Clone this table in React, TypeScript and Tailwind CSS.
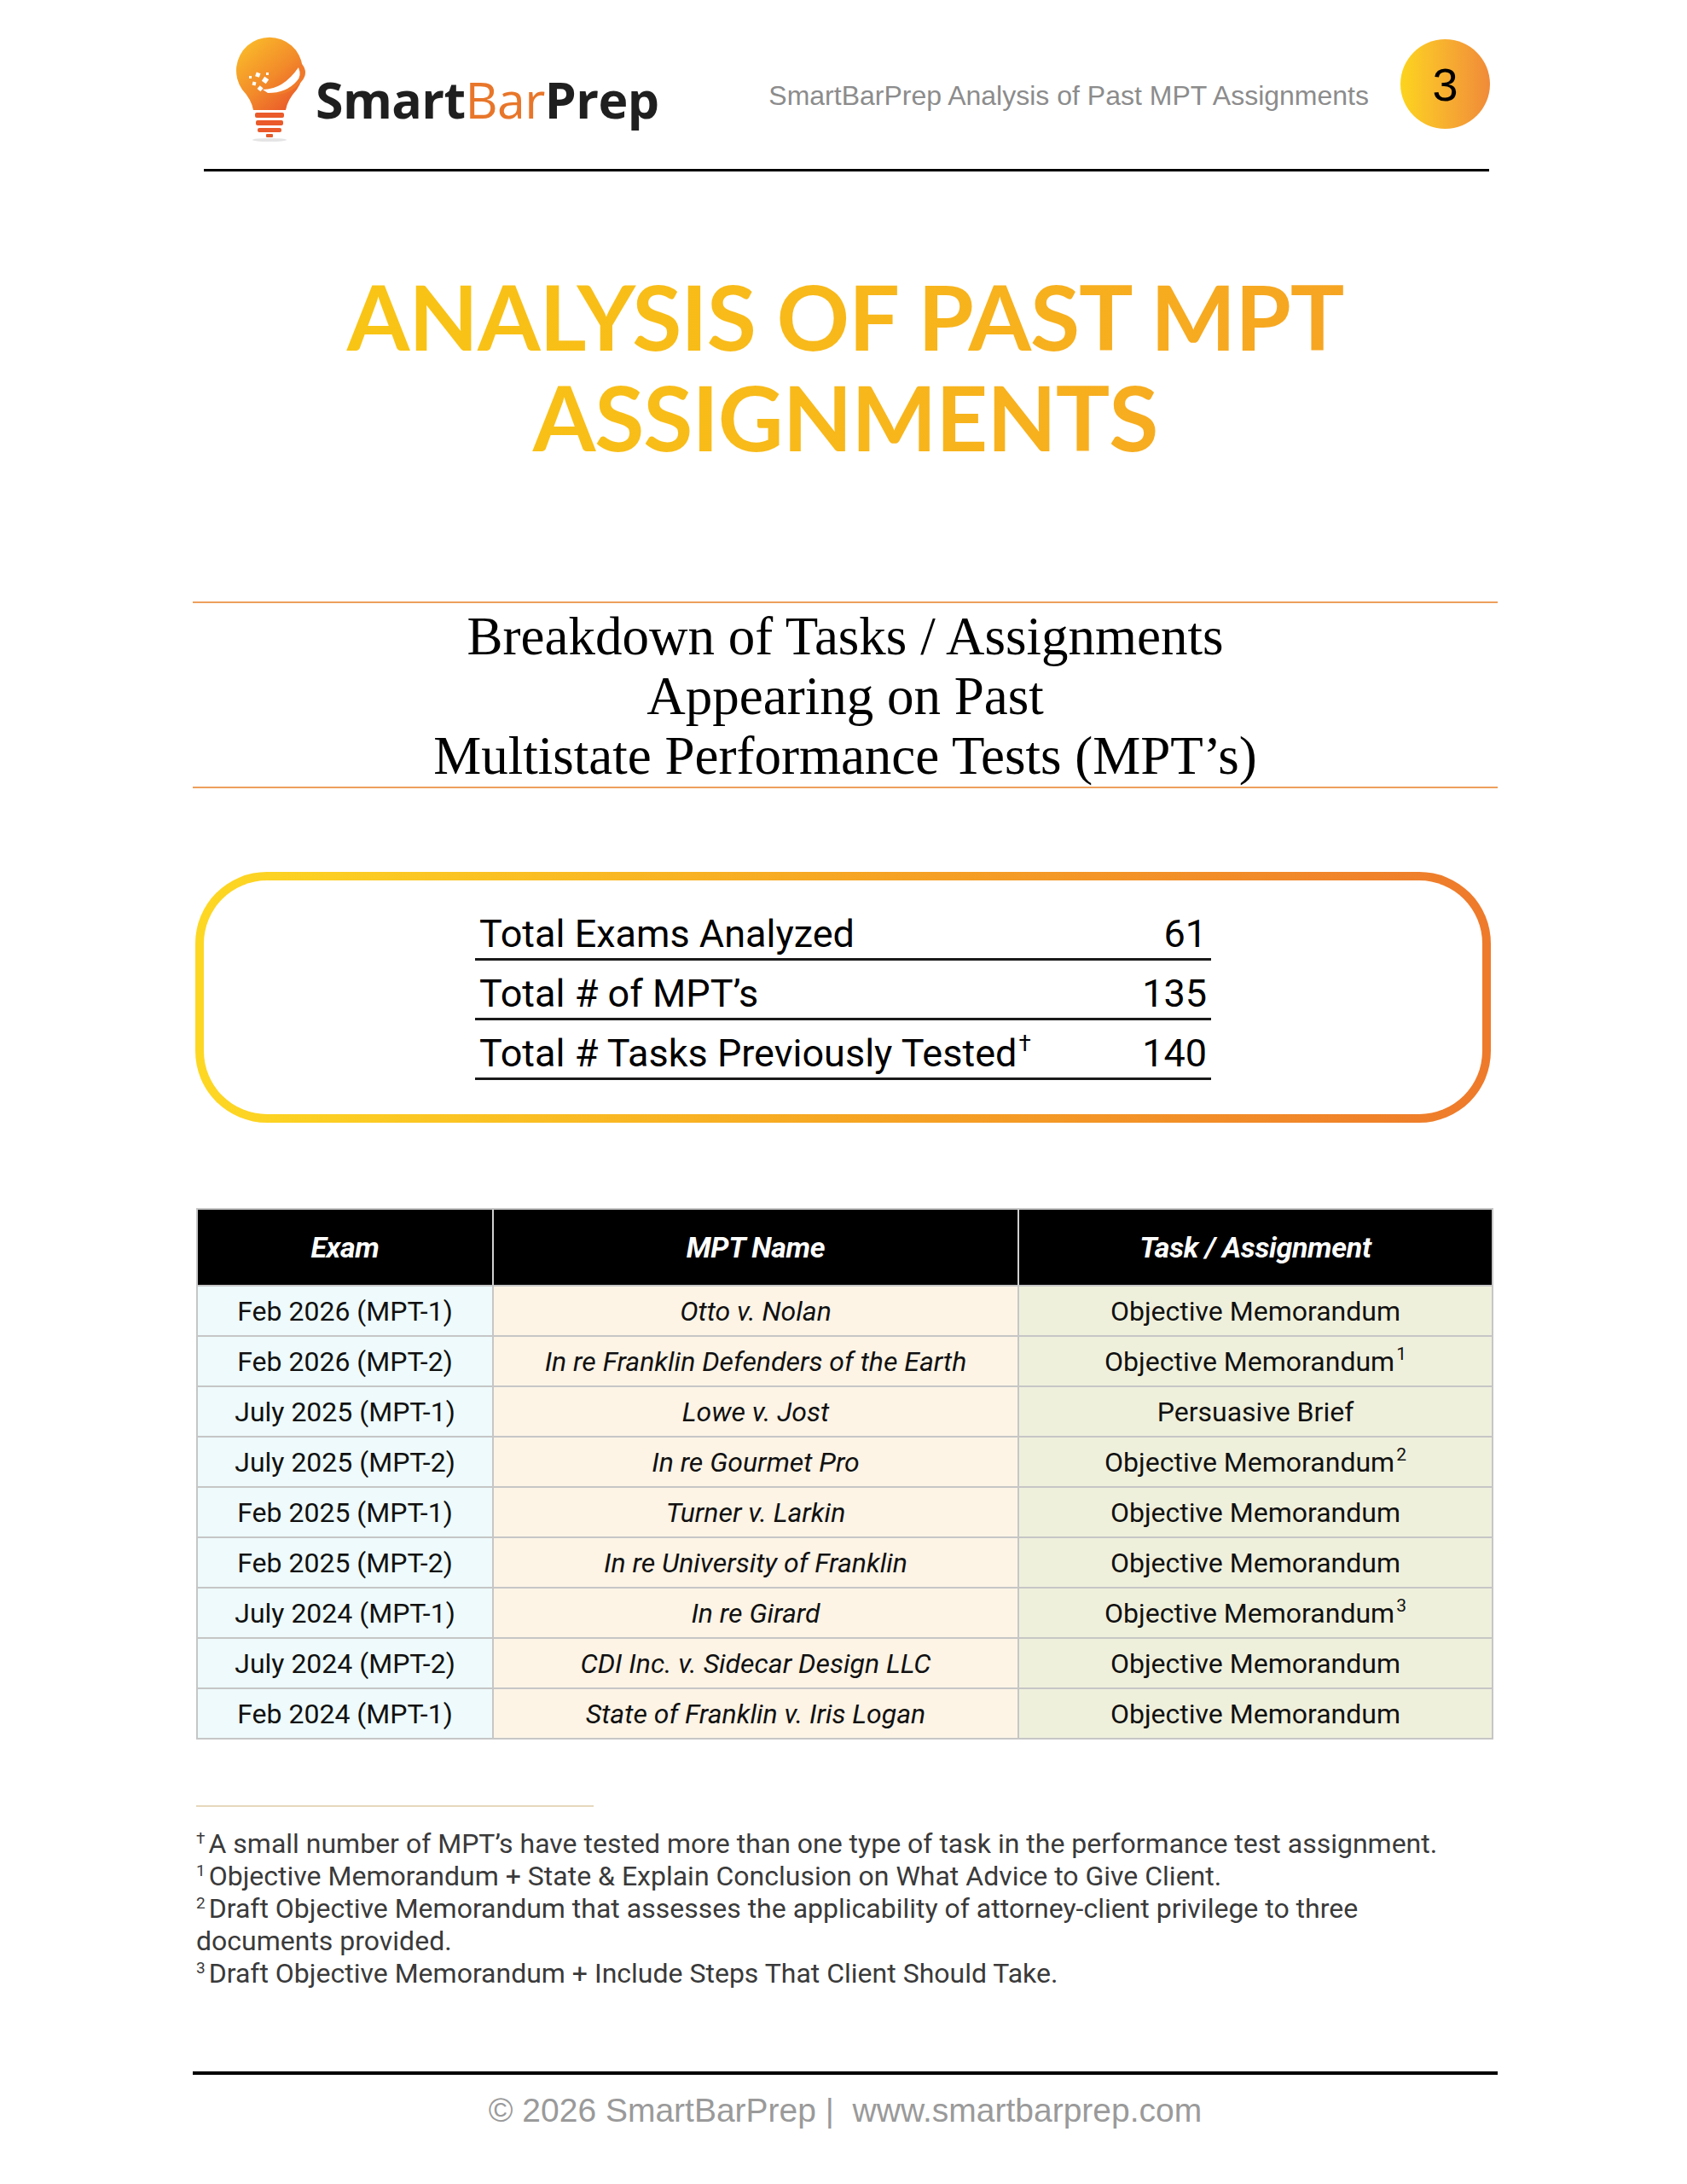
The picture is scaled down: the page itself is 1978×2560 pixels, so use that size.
const rows = [
  { exam: "Feb 2026 (MPT-1)", name: "Otto v. Nolan", task: "Objective Memorandum", note: "" },
  { exam: "Feb 2026 (MPT-2)", name: "In re Franklin Defenders of the Earth", task: "Objective Memorandum", note: "1" },
  { exam: "July 2025 (MPT-1)", name: "Lowe v. Jost", task: "Persuasive Brief", note: "" },
  { exam: "July 2025 (MPT-2)", name: "In re Gourmet Pro", task: "Objective Memorandum", note: "2" },
  { exam: "Feb 2025 (MPT-1)", name: "Turner v. Larkin", task: "Objective Memorandum", note: "" },
  { exam: "Feb 2025 (MPT-2)", name: "In re University of Franklin", task: "Objective Memorandum", note: "" },
  { exam: "July 2024 (MPT-1)", name: "In re Girard", task: "Objective Memorandum", note: "3" },
  { exam: "July 2024 (MPT-2)", name: "CDI Inc. v. Sidecar Design LLC", task: "Objective Memorandum", note: "" },
  { exam: "Feb 2024 (MPT-1)", name: "State of Franklin v. Iris Logan", task: "Objective Memorandum", note: "" },
];

const stats = [
  { label: "Total Exams Analyzed", value: "61", mark: "" },
  { label: "Total # of MPT\u2019s", value: "135", mark: "" },
  { label: "Total # Tasks Previously Tested", value: "140", mark: "\u2020" },
];

const footnotes = [
  { mark: "\u2020", text: "A small number of MPT\u2019s have tested more than one type of task in the performance test assignment." },
  { mark: "1", text: "Objective Memorandum + State & Explain Conclusion on What Advice to Give Client." },
  { mark: "2", text: "Draft Objective Memorandum that assesses the applicability of attorney-client privilege to three documents provided." },
  { mark: "3", text: "Draft Objective Memorandum + Include Steps That Client Should Take." },
];

function BulbLogo() {
  return (
    <svg width="92" height="125" viewBox="0 0 92 125">
      <defs>
        <linearGradient id="bulb" x1="0.1" y1="0" x2="0.9" y2="1">
          <stop offset="0" stopColor="#fbbf2a" />
          <stop offset="0.55" stopColor="#f28a2a" />
          <stop offset="1" stopColor="#e9532a" />
        </linearGradient>
      </defs>
      <path d="M 14 64 A 39 39 0 1 1 78 64 Q 67 76 65 88 L 27 88 Q 25 76 14 64 Z" fill="url(#bulb)" />
      {/* swoosh */}
      <path d="M 38 64 Q 64 66 84 34 Q 92 44 84 54 Q 70 72 44 70 Z" fill="#f07a2a" />
      <path d="M 38 64 Q 62 64 80 38 Q 84 48 78 54 Q 66 68 44 68 Z" fill="#ffffff" />
      {/* sparkles */}
      <rect x="30" y="44" width="5" height="5" fill="#fff" transform="rotate(20 32 46)" />
      <rect x="38" y="50" width="6" height="6" fill="#fff" transform="rotate(35 41 53)" />
      <rect x="26" y="55" width="4" height="4" fill="#fff" transform="rotate(15 28 57)" />
      <rect x="33" y="60" width="5" height="5" fill="#fff" transform="rotate(40 35 62)" />
      <rect x="42" y="44" width="3" height="3" fill="#fff" />
      <rect x="22" y="48" width="3" height="3" fill="#fff" />
      <rect x="29" y="91" width="34" height="6" rx="2" fill="#ea5a2a" />
      <rect x="30" y="100" width="32" height="6" rx="2" fill="#ea5a2a" />
      <rect x="32" y="109" width="28" height="5" rx="2" fill="#ea5a2a" />
      <rect x="42" y="116" width="8" height="4" rx="1" fill="#e45a2a" />
      <ellipse cx="46" cy="123" rx="20" ry="2" fill="#e4e4e4" />
    </svg>
  );
}

export default function App() {
  return (
    <div className="w-[1978px] h-[2560px] bg-white overflow-hidden">
      <div className="ml-[226px] w-[1530px]">
        {/* Header */}
        <div className="flex items-start pt-[40px] pl-[44px] pr-[9px] h-[198px]">
          <div className="mt-[1px]">
            <BulbLogo />
          </div>
          <div
            className="ml-[8px] mt-[47px] text-[59px] leading-none font-bold text-[#1f1f1f] tracking-[-0.01em]"
            style={{ fontFamily: '"Open Sans", sans-serif' }}
          >
            Smart<span className="font-normal text-[#e8762a]">Bar</span>Prep
          </div>
          <div className="flex-1" />
          <div
            className="mt-[56px] text-[32px] leading-none text-[#8c8c8c]"
            style={{ fontFamily: '"Liberation Sans", Arial, sans-serif' }}
          >
            SmartBarPrep Analysis of Past MPT Assignments
          </div>
          <div
            className="ml-[37px] mt-[6px] w-[105px] h-[105px] rounded-full bg-gradient-to-r from-[#fcd41c] to-[#f08a38] flex items-center justify-center text-[54px] leading-none text-black"
            style={{ fontFamily: '"Liberation Sans", Arial, sans-serif' }}
          >
            3
          </div>
        </div>
        <div className="ml-[13px] mr-[10px] h-[3px] bg-black" />

        {/* Title */}
        <h1
          className="mt-[110px] text-center text-[106px] leading-[118px] font-bold tracking-[-0.01em] bg-gradient-to-r from-[#f9c913] via-[#f8b81a] to-[#f59f24] bg-clip-text text-transparent"
          style={{ fontFamily: "Lato, sans-serif" }}
        >
          ANALYSIS OF PAST MPT
          <br />
          ASSIGNMENTS
        </h1>

        {/* Subtitle */}
        <div className="mt-[158px] h-[2px] bg-[#ee9f5c]" />
        <div
          className="mt-[4px] text-center text-[63px] leading-[70px] text-black"
          style={{ fontFamily: '"Liberation Serif", serif' }}
        >
          <div>Breakdown of Tasks / Assignments</div>
          <div>Appearing on Past</div>
          <div>Multistate Performance Tests (MPT&rsquo;s)</div>
        </div>
        <div className="mt-[1px] h-[2px] bg-[#ee9f5c]" />

        {/* Stats box */}
        <div className="mt-[98px] ml-[3px] w-[1519px] h-[294px] rounded-[84px] bg-gradient-to-r from-[#fdd823] via-[#f6a623] to-[#ee7a2b] p-[10px]">
          <div className="h-full w-full rounded-[74px] bg-white pt-[24px]">
            <div className="w-[863px] mx-auto" style={{ fontFamily: "Roboto, sans-serif" }}>
              {stats.map((s) => (
                <div
                  key={s.label}
                  className="h-[70px] flex items-end justify-between border-b-[3px] border-[#1a1a1a] pb-[6px] px-[5px] text-[45px] leading-none text-black"
                >
                  <span>
                    {s.label}
                    {s.mark && <sup className="text-[26px] top-[-18px] ml-[2px]">{s.mark}</sup>}
                  </span>
                  <span>{s.value}</span>
                </div>
              ))}
            </div>
          </div>
        </div>

        {/* Table */}
        <div
          className="mt-[100px] ml-[4px] w-[1521px] border-2 border-[#c6c6c6]"
          style={{ fontFamily: "Roboto, sans-serif" }}
        >
          <div className="grid grid-cols-[347px_616px_554px] h-[88px] bg-black text-white text-[34px] font-bold italic tracking-[-0.01em]">
            <div className="flex items-center justify-center border-r-2 border-[#d0d0d0]">Exam</div>
            <div className="flex items-center justify-center border-r-2 border-[#d0d0d0]">MPT Name</div>
            <div className="flex items-center justify-center">Task / Assignment</div>
          </div>
          {rows.map((r) => (
            <div
              key={r.exam}
              className="grid grid-cols-[347px_616px_554px] h-[59px] border-t-2 border-[#c6c6c6] text-[32px] text-[#111]"
            >
              <div className="flex items-center justify-center bg-[#eefafb] border-r-2 border-[#c6c6c6]">{r.exam}</div>
              <div className="flex items-center justify-center bg-[#fdf4e6] border-r-2 border-[#c6c6c6] italic">{r.name}</div>
              <div className="flex items-center justify-center bg-[#eff0dc]">
                <span>
                  {r.task}
                  {r.note && <sup className="text-[21px] top-[-13px] ml-[2px]">{r.note}</sup>}
                </span>
              </div>
            </div>
          ))}
        </div>

        {/* Footnotes */}
        <div className="mt-[77px] ml-[4px] w-[466px] h-[2px] bg-[#e6d8bc]" />
        <div
          className="mt-[24px] ml-[4px] pr-[30px] text-[32px] leading-[38px] text-[#3a3a3a]"
          style={{ fontFamily: "Roboto, sans-serif" }}
        >
          {footnotes.map((f) => (
            <p key={f.mark}>
              <sup className="text-[19px] top-[-11px] mr-[4px]">{f.mark}</sup>
              {f.text}
            </p>
          ))}
        </div>

        {/* Footer */}
        <div className="mt-[96px] h-[4px] bg-black" />
        <div
          className="mt-[22px] text-center text-[39px] leading-none text-[#9a9a9a]"
          style={{ fontFamily: '"Liberation Sans", Arial, sans-serif' }}
        >
          &copy; 2026 SmartBarPrep |&nbsp; www.smartbarprep.com
        </div>
      </div>
    </div>
  );
}
